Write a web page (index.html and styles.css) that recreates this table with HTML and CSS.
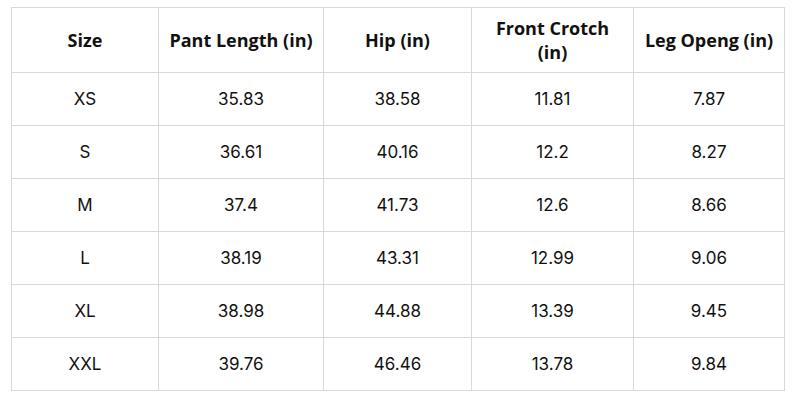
FILE: index.html
```html
<!DOCTYPE html>
<html>
<head>
<meta charset="utf-8">
<link rel="stylesheet" href="styles.css">
</head>
<body>
<table class="size-table">
  <colgroup>
    <col class="c1"><col class="c2"><col class="c3"><col class="c4"><col class="c5">
  </colgroup>
  <thead>
    <tr>
      <th>Size</th>
      <th>Pant Length (in)</th>
      <th>Hip (in)</th>
      <th>Front Crotch<br>(in)</th>
      <th>Leg Openg (in)</th>
    </tr>
  </thead>
  <tbody>
    <tr><td>XS</td><td>35.83</td><td>38.58</td><td>11.81</td><td>7.87</td></tr>
    <tr><td>S</td><td>36.61</td><td>40.16</td><td>12.2</td><td>8.27</td></tr>
    <tr><td>M</td><td>37.4</td><td>41.73</td><td>12.6</td><td>8.66</td></tr>
    <tr><td>L</td><td>38.19</td><td>43.31</td><td>12.99</td><td>9.06</td></tr>
    <tr><td>XL</td><td>38.98</td><td>44.88</td><td>13.39</td><td>9.45</td></tr>
    <tr><td>XXL</td><td>39.76</td><td>46.46</td><td>13.78</td><td>9.84</td></tr>
  </tbody>
</table>
</body>
</html>
```
FILE: styles.css
```css
html, body {
  margin: 0;
  padding: 0;
  background: #ffffff;
}
body {
  padding: 7px 0 0 11px;
}
.size-table {
  border-collapse: collapse;
  table-layout: fixed;
  width: 773px;
  color: #111111;
}
.c1 { width: 147px; }
.c2 { width: 165px; }
.c3 { width: 148px; }
.c4 { width: 162px; }
.c5 { width: 151px; }
.size-table th,
.size-table td {
  border: 1px solid #d9d9d9;
  text-align: center;
  vertical-align: middle;
  padding: 0;
}
.size-table th {
  height: 64px;
  font-family: "Open Sans", "Liberation Sans", sans-serif;
  font-weight: 700;
  font-size: 18px;
  line-height: 24px;
}
.size-table td {
  height: 52px;
  font-family: Inter, "Liberation Sans", sans-serif;
  font-size: 17px;
  line-height: 20px;
}
```
